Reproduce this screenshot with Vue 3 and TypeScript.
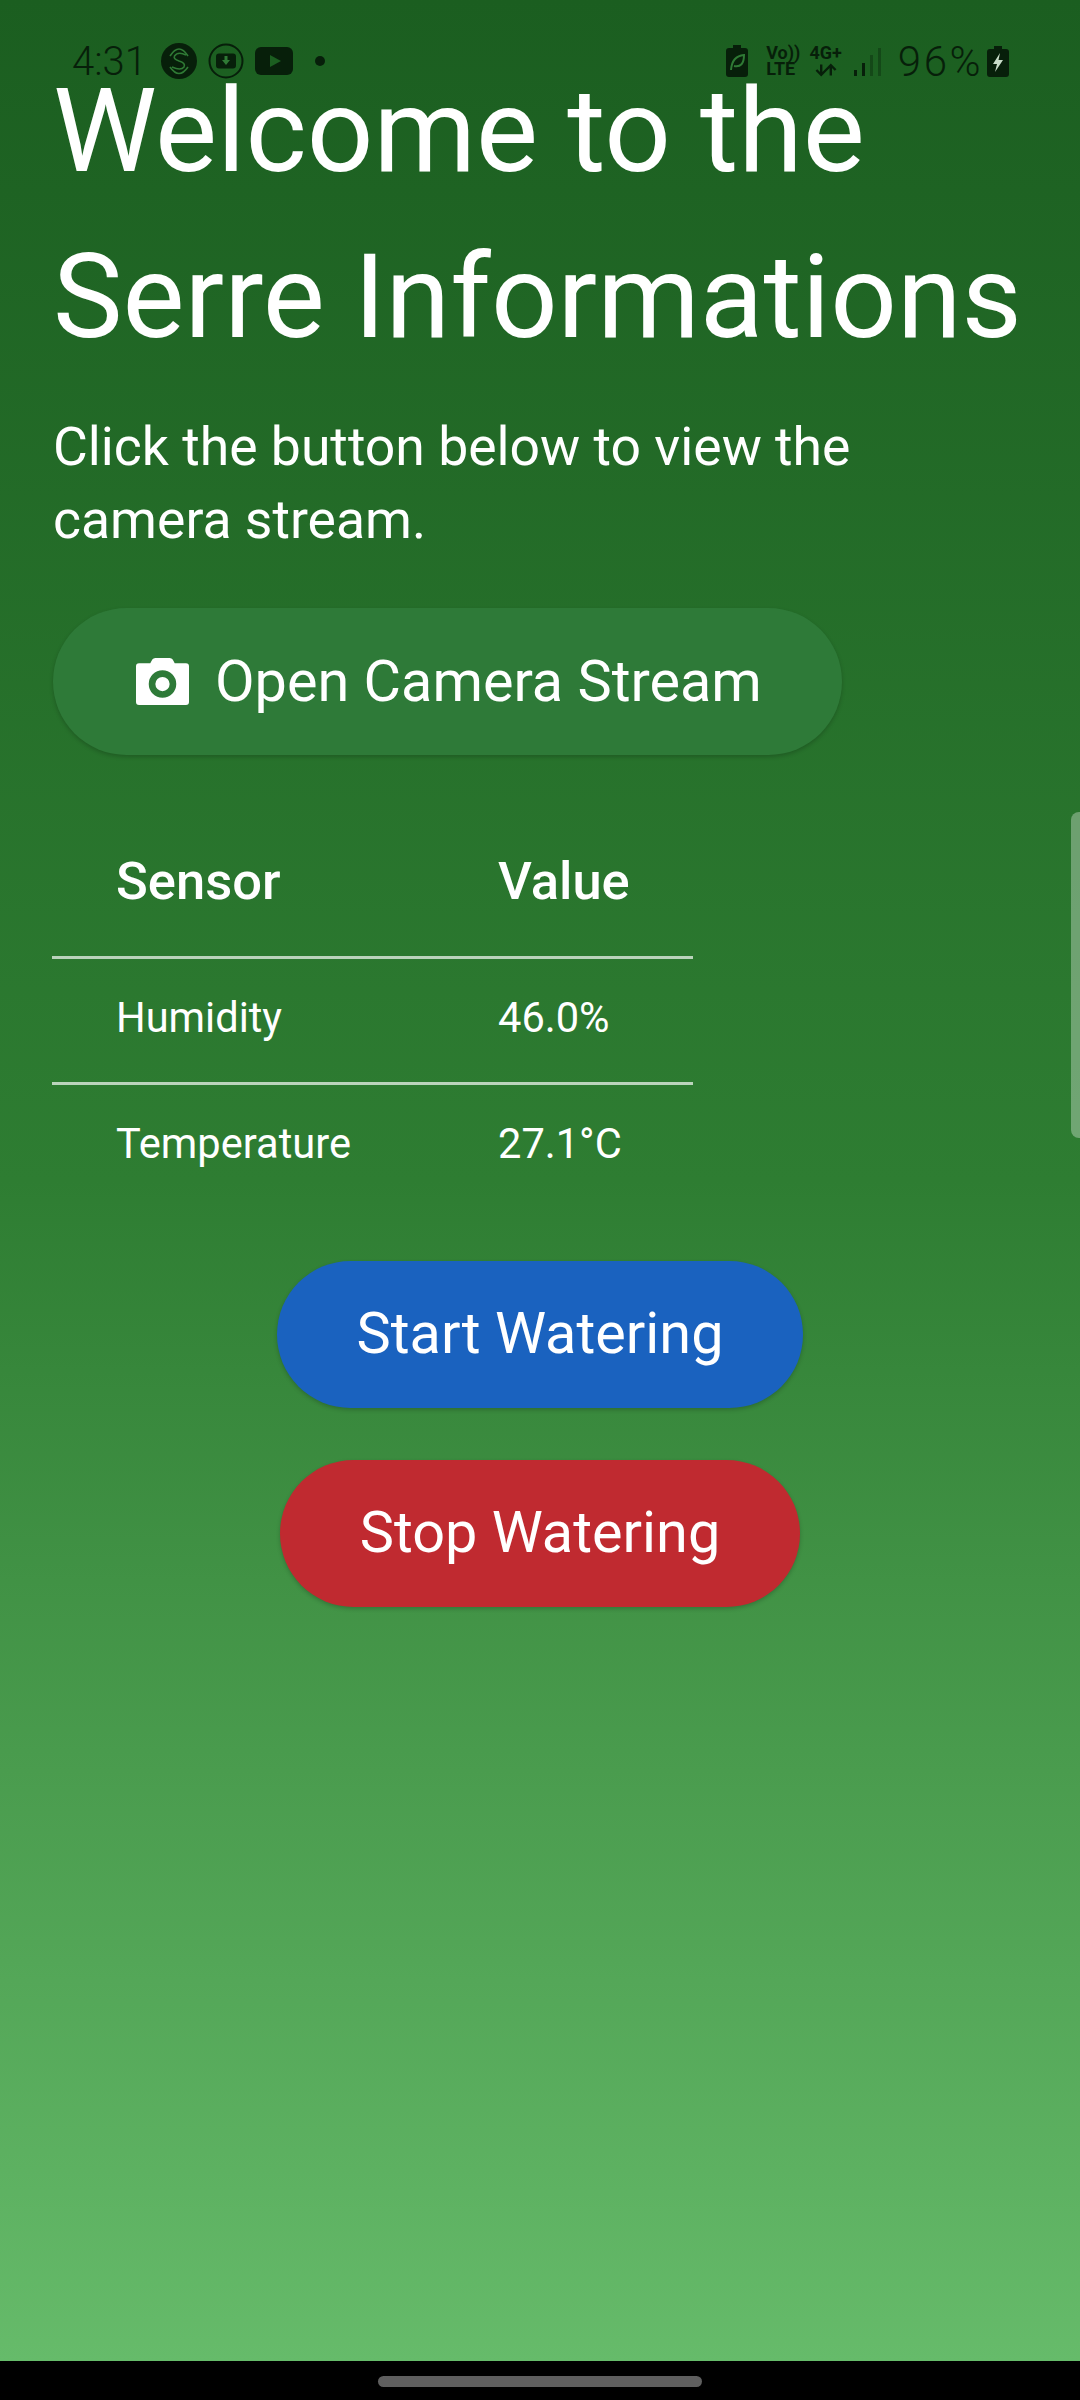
<template>
  <div class="screen">
    <div class="page">
      <h1 class="title">Welcome to the Serre Informations</h1>
      <p class="intro">Click the button below to view the camera stream.</p>

      <button class="pill camera-btn">
        <svg class="camera-icon" viewBox="0 0 52 46">
          <path
            fill="#fff"
            fill-rule="evenodd"
            d="M3 5h11l2-3.500Q17 0 19 0h14q2 0 3 1.500L38 5h11q3 0 3 3v35q0 3-3 3H3q-3 0-3-3V8q0-3 3-3zM26 12a13.500 13.500 0 1 0 0 27 13.500 13.500 0 0 0 0-27zM26 18.500a7 7 0 1 1 0 14 7 7 0 0 1 0-14z"
          />
        </svg>
        <span>Open Camera Stream</span>
      </button>

      <table class="sensors">
        <thead>
          <tr>
            <th>Sensor</th>
            <th>Value</th>
          </tr>
        </thead>
        <tbody>
          <tr v-for="row in readings" :key="row.name">
            <td>{{ row.name }}</td>
            <td>{{ row.value }}</td>
          </tr>
        </tbody>
      </table>

      <div class="actions">
        <button class="pill start">Start Watering</button>
        <button class="pill stop">Stop Watering</button>
      </div>
    </div>

    <div class="statusbar">
      <div class="status-left">
        <span class="clock">4:31</span>
        <svg class="app-icon" viewBox="0 0 36 36">
          <circle cx="18" cy="18" r="18" fill="#071f0a" />
          <path d="M9 13Q18 -1 27 13M9 24Q18 37 27 24" fill="none" stroke="#2f7a35" stroke-width="1.600" />
          <path d="M25 12Q17 8 13.500 13 12 16 18 18 25 20 23 24 20 28 11 24" fill="none" stroke="#2f7a35" stroke-width="1.600" />
        </svg>
        <svg class="app-icon ring" viewBox="0 0 36 36">
          <circle cx="18" cy="18" r="16.500" fill="none" stroke="#071f0a" stroke-width="2" />
          <rect x="8" y="10.500" width="20" height="15" rx="3" fill="#071f0a" />
          <path d="M16.500 13h3v4h2.500L18 22l-4-5h2.500z" fill="#2f7a35" />
        </svg>
        <svg class="yt-icon" viewBox="0 0 38 28">
          <rect width="38" height="28" rx="6" fill="#071f0a" />
          <path d="M15 8l11 6-11 6z" fill="#1b5e20" />
        </svg>
        <span class="dot"></span>
      </div>
      <div class="status-right">
        <svg class="batt-leaf" viewBox="0 0 22 32">
          <path d="M7 0h8v3h4q3 0 3 3v23q0 3-3 3H3q-3 0-3-3V6q0-3 3-3h4z" fill="#071f0a" />
          <path d="M5 25Q6 11 18 10 18 23 8 21" fill="none" stroke="#2f7a35" stroke-width="2" />
        </svg>
        <div class="net volte">
          <span>Vo))</span>
          <span>LTE</span>
        </div>
        <div class="net four-g">
          <span>4G+</span>
          <svg class="arrows" viewBox="0 0 30 14">
            <path d="M9 0v12M3 7l6 6 6-6M21 14V2M15 7l6-6 6 6" fill="none" stroke="#071f0a" stroke-width="3" />
          </svg>
        </div>
        <div class="signal">
          <i v-for="bar in signalBars" :key="bar.height" :class="{ off: bar.off }" :style="{ height: bar.height + 'px' }"></i>
        </div>
        <span class="percent">96%</span>
        <svg class="batt-bolt" viewBox="0 0 22 31">
          <path d="M7 0h8v3h4q3 0 3 3v22q0 3-3 3H3q-3 0-3-3V6q0-3 3-3h4z" fill="#071f0a" />
          <path d="M13 7L6 18h4l-2 8 8-12h-4.500z" fill="#c9dcc9" />
        </svg>
      </div>
    </div>

    <div class="scroll-thumb"></div>

    <div class="navbar">
      <div class="nav-handle"></div>
    </div>
  </div>
</template>

<script setup lang="ts">
interface Reading {
  name: string
  value: string
}

const readings: Reading[] = [
  { name: 'Humidity', value: '46.0%' },
  { name: 'Temperature', value: '27.1°C' }
]

const signalBars = [
  { height: 6, off: false },
  { height: 13, off: false },
  { height: 21, off: true },
  { height: 28, off: true }
]
</script>

<style>
body {
  margin: 0;
  background: #000;
}
</style>

<style scoped>
.screen {
  position: relative;
  width: 1080px;
  height: 2400px;
  overflow: hidden;
  background: #000;
  font-family: Roboto, "Liberation Sans", sans-serif;
  color: #fff;
}
.page {
  box-sizing: border-box;
  height: 2361px;
  padding: 48px 53px 0;
  background: linear-gradient(to bottom, #1b5e20, #2e7d32 50%, #66bb6a);
}
.title {
  margin: 0;
  font-size: 117px;
  font-weight: 400;
  line-height: 166px;
}
.intro {
  margin: 30px 0 0;
  width: 880px;
  font-size: 53.5px;
  line-height: 73px;
}
.pill {
  height: 147px;
  border: none;
  border-radius: 74px;
  color: #fff;
  font-family: inherit;
  font-size: 57.6px;
  box-shadow: 0 2px 4px rgba(0, 0, 0, 0.2);
}
.camera-btn {
  display: flex;
  align-items: center;
  gap: 26px;
  width: 789px;
  margin-top: 52px;
  padding: 0 0 0 83px;
  background: #2e7a38;
}
.camera-icon {
  width: 53px;
  height: 47px;
}
.sensors {
  margin: 51px 0 0 -1px;
  width: 641px;
  border-collapse: collapse;
  font-size: 41.6px;
  table-layout: fixed;
}
.sensors th,
.sensors td {
  padding: 0 0 0 64px;
  text-align: left;
}
.sensors th {
  height: 150px;
  font-size: 52.5px;
  font-weight: 500;
  border-bottom: 3px solid rgba(255, 255, 255, 0.68);
}
.sensors th:first-child,
.sensors td:first-child {
  width: 318px;
}
.sensors td {
  height: 117px;
  padding-bottom: 6px;
}
.sensors tbody tr:first-child td {
  border-bottom: 3px solid rgba(255, 255, 255, 0.68);
}
.actions {
  display: flex;
  flex-direction: column;
  align-items: center;
  gap: 52px;
  margin: 53px 0 0;
}
.start,
.stop {
  padding-bottom: 3px;
}
.start {
  width: 526px;
  background: #1a62bf;
}
.stop {
  width: 520px;
  background: #c02a30;
}
.statusbar {
  position: absolute;
  top: 41px;
  left: 72px;
  right: 71px;
  display: flex;
  justify-content: space-between;
  align-items: center;
  height: 40px;
  color: #071f0a;
}
.status-left,
.status-right {
  display: flex;
  align-items: center;
}
.clock {
  width: 89px;
  font-size: 40px;
  font-weight: 300;
}
.app-icon {
  width: 36px;
  height: 36px;
  margin-right: 11px;
}
.yt-icon {
  width: 38px;
  height: 28px;
}
.dot {
  width: 10px;
  height: 10px;
  margin-left: 22px;
  border-radius: 50%;
  background: #071f0a;
}
.batt-leaf {
  width: 22px;
  height: 32px;
  margin-right: 18px;
}
.net {
  display: flex;
  flex-direction: column;
  align-items: center;
  font-size: 18px;
  font-weight: 700;
  line-height: 16px;
  color: #071f0a;
}
.volte {
  width: 32px;
  margin-right: 12px;
  align-items: flex-start;
}
.four-g {
  width: 31px;
  margin-right: 13px;
}
.arrows {
  width: 24px;
  height: 14px;
  margin-top: 2px;
}
.signal {
  display: flex;
  align-items: flex-end;
  gap: 4.500px;
  height: 30px;
  margin-right: 17px;
}
.signal i {
  width: 3.300px;
  background: #071f0a;
}
.signal i.off {
  background: rgba(7, 31, 10, 0.35);
}
.percent {
  font-size: 42px;
  font-weight: 300;
  letter-spacing: 2.500px;
  margin-right: 4px;
}
.batt-bolt {
  width: 22px;
  height: 31px;
}
.scroll-thumb {
  position: absolute;
  top: 812px;
  right: 0;
  width: 9px;
  height: 326px;
  border-radius: 8px 0 0 8px;
  background: rgba(255, 255, 255, 0.32);
}
.navbar {
  display: flex;
  justify-content: center;
  padding-top: 15px;
}
.nav-handle {
  width: 324px;
  height: 11px;
  border-radius: 6px;
  background: #5f5f5f;
}
</style>
